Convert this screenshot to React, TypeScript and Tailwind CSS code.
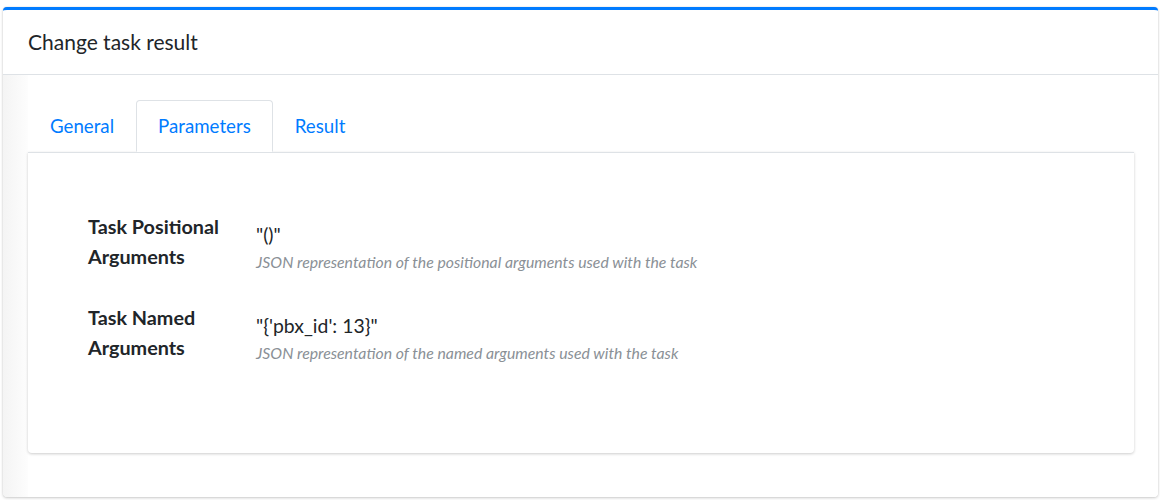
import React from "react";

const font = { fontFamily: '"Lato", "Liberation Sans", sans-serif' };

function FieldRow({ label, value, help }: { label: string[]; value: string; help: string }) {
  return (
    <div className="flex">
      <div className="w-[168px] shrink-0 text-[19.8px] leading-[30px] font-bold text-[#212529]">
        {label.map((l) => (
          <div key={l}>{l}</div>
        ))}
      </div>
      <div className="pt-[10px]">
        <div className="text-[19.4px] leading-[28px] text-[#212529]">{value}</div>
        <div className="text-[15.8px] leading-[25px] italic text-[#8a9096]">{help}</div>
      </div>
    </div>
  );
}

export default function App() {
  const tabs = ["General", "Parameters", "Result"];
  const active = "Parameters";

  return (
    <div className="w-[1160px] h-[500px] bg-white pt-[7px] pl-[3px] pr-[2px]" style={font}>
      <div className="h-[490px] rounded-[4px] border-t-[3px] border-t-[#007bff] bg-white shadow-[0_0_1px_rgba(0,0,0,0.2),0_1px_3px_rgba(0,0,0,0.2)] overflow-hidden flex flex-col">
        {/* Header */}
        <div className="h-[65px] shrink-0 border-b border-[#dee2e6] px-[25px] flex items-center">
          <h3 className="text-[21px] text-[#212529]">Change task result</h3>
        </div>

        {/* Body */}
        <div className="flex-1 pl-[25px] pr-[24px] pt-[25px] bg-[linear-gradient(to_right,#f4f4f4,#fdfdfd_25px,#ffffff_25px)]">
          <div className="flex">
            {tabs.map((t) => (
              <div
                key={t}
                className={
                  t === active
                    ? "h-[52px] px-[21px] flex items-center text-[18.7px] text-[#007bff] bg-white border border-[#dee2e6] border-b-white rounded-t-[4px] -mb-px relative z-10"
                    : "h-[52px] px-[21px] flex items-center text-[18.7px] text-[#007bff] border border-transparent"
                }
              >
                {t}
              </div>
            ))}
          </div>
          <div className="h-[301px] bg-white border-t border-[#dee2e6] rounded-b-[4px] shadow-[0_1px_3px_rgba(0,0,0,0.2)] pl-[60px] pt-[58px] flex flex-col gap-[28px]">
            <FieldRow
              label={["Task Positional", "Arguments"]}
              value={'"()"'}
              help="JSON representation of the positional arguments used with the task"
            />
            <FieldRow
              label={["Task Named", "Arguments"]}
              value={"\"{'pbx_id': 13}\""}
              help="JSON representation of the named arguments used with the task"
            />
          </div>
        </div>
      </div>
    </div>
  );
}
